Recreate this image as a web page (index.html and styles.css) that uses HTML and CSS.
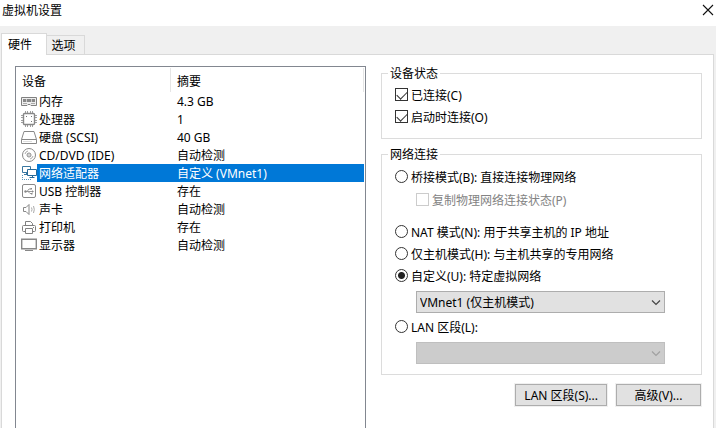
FILE: index.html
```html
<!DOCTYPE html>
<html lang="zh-CN">
<head>
<meta charset="utf-8">
<title>虚拟机设置</title>
<link rel="stylesheet" href="styles.css">
</head>
<body>
<header class="titlebar">
  <h1>虚拟机设置</h1>
  <button class="close" type="button" aria-label="关闭">
    <svg width="12" height="12" viewBox="0 0 12 12"><path d="M1 1l10 10M11 1L1 11" fill="none" stroke="#111" stroke-width="1.1"/></svg>
  </button>
</header>
<div class="tabs" role="tablist">
  <button class="tab active" type="button" role="tab" aria-selected="true">硬件</button>
  <button class="tab" type="button" role="tab" aria-selected="false">选项</button>
</div>
<main class="panel">
  <section class="list">
    <table class="devices">
      <thead><tr><th class="name">设备</th><th>摘要</th></tr></thead>
      <tbody>
        <tr><td><div class="device"><svg width="16" height="16" viewBox="0 0 16 16"><path d="M.5 4.500h15v8H10l-1-1H7l-1 1H.5z" fill="#eee" stroke="#808080"/><path d="M2 6h12v3H2z" fill="#888"/><path d="M5.500 6v3M10.500 6v3" stroke="#ccc"/><path d="M2 10.500h4M10 10.500h4" stroke="#aaa"/></svg><span>内存</span></div></td><td>4.3 GB</td></tr>
        <tr><td><div class="device"><svg width="16" height="16" viewBox="0 0 16 16"><path d="M4.500 0v16M6.500 0v16M9.500 0v16M11.500 0v16M0 4.500h16M0 6.500h16M0 9.500h16M0 11.500h16" stroke="#a0a0a0"/><rect x="2.500" y="2.500" width="11" height="11" rx="1" fill="#fff" stroke="#888" stroke-width="1.400"/><path d="M5 5h1v1H5zM10 5h1v1h-1zM10 10h1v1h-1z" fill="#777"/></svg><span>处理器</span></div></td><td>1</td></tr>
        <tr><td><div class="device"><svg width="16" height="16" viewBox="0 0 16 16"><path d="M3 2.500h10l2.500 8v4H.5v-4zM.5 10.500h15" fill="#fff" stroke="#888"/><path d="M2 12.500h9" stroke="#ddd"/></svg><span>硬盘 (SCSI)</span></div></td><td>40 GB</td></tr>
        <tr><td><div class="device"><svg width="16" height="16" viewBox="0 0 16 16"><g fill="none" stroke="#888"><circle cx="8" cy="8" r="6.500"/><circle cx="8" cy="8" r="2"/><path d="M4 7a4 4 0 0 1 3-3M12 9a4 4 0 0 1-3 3" stroke="#aaa"/></g><circle cx="8" cy="8" r=".7" fill="#888"/></svg><span>CD/DVD (IDE)</span></div></td><td>自动检测</td></tr>
        <tr class="selected"><td><div class="device"><svg width="16" height="16" viewBox="0 0 16 16"><path d="M1.500 1.500h8v6h-8zM3 9.500h5M5.500 7.500v2" fill="#fff" stroke="#3977a0"/><path d="M6.500 4.500h9v6h-9zM8.500 12.500h5M11.500 10.500v2" fill="#fff" stroke="#286a98"/><path d="M1.500 10v5M3 14.500h8" stroke="#5795bd" stroke-dasharray="1 1" fill="none"/></svg><span>网络适配器</span></div></td><td>自定义 (VMnet1)</td></tr>
        <tr><td><div class="device"><svg width="16" height="16" viewBox="0 0 16 16"><rect x="1.500" y="1.500" width="13" height="13" rx="1.500" fill="#fff" stroke="#888"/><path d="M4 8.500h8M6 8.500l2-2.500h2M7 8.500l2 2h1" fill="none" stroke="#999"/><circle cx="4.500" cy="8.500" r="1.200" fill="#888"/><path d="M11 7.200l2 1.300-2 1.300zM9.500 5h1.500v1.500H9.500zM10 10h1.500v1.500H10z" fill="#888"/></svg><span>USB 控制器</span></div></td><td>存在</td></tr>
        <tr><td><div class="device"><svg width="16" height="16" viewBox="0 0 16 16"><g fill="none" stroke="#888"><path d="M2.500 6.500H5l3-3v10l-3-3H2.500z"/><path d="M10.500 6.500q1 2 0 4M12.500 5q1.600 3.500 0 7" stroke="#aaa"/></g></svg><span>声卡</span></div></td><td>自动检测</td></tr>
        <tr><td><div class="device"><svg width="16" height="16" viewBox="0 0 16 16"><g fill="#fff" stroke="#808080"><path d="M4.500 7V2.500h5l2 2V7"/><rect x="1.500" y="6.500" width="13" height="6" rx="1"/><path d="M4.500 9.500h7v5h-7z"/><path d="M12 8.500h1"/></g></svg><span>打印机</span></div></td><td>存在</td></tr>
        <tr><td><div class="device"><svg width="16" height="16" viewBox="0 0 16 16"><path d="M.7 2.200h14.600v9.600H.7z" fill="#fff" stroke="#888" stroke-width="1.400"/><path d="M4 13.500h8" stroke="#888"/></svg><span>显示器</span></div></td><td>自动检测</td></tr>
      </tbody>
    </table>
  </section>
  <form class="settings">
    <fieldset>
      <legend>设备状态</legend>
      <label class="option"><input type="checkbox" checked><span>已连接(C)</span></label>
      <label class="option"><input type="checkbox" checked><span>启动时连接(O)</span></label>
    </fieldset>
    <fieldset class="network">
      <legend>网络连接</legend>
      <label class="option"><input type="radio" name="net"><span>桥接模式(B): 直接连接物理网络</span></label>
      <label class="option nested"><input type="checkbox" disabled><span>复制物理网络连接状态(P)</span></label>
      <label class="option"><input type="radio" name="net"><span>NAT 模式(N): 用于共享主机的 IP 地址</span></label>
      <label class="option"><input type="radio" name="net"><span>仅主机模式(H): 与主机共享的专用网络</span></label>
      <label class="option"><input type="radio" name="net" checked><span>自定义(U): 特定虚拟网络</span></label>
      <div class="combo">
        <select aria-label="特定虚拟网络"><option>VMnet1 (仅主机模式)</option></select>
        <svg width="10" height="6" viewBox="0 0 10 6"><path d="M1 .5l4 4 4-4" fill="none" stroke="currentColor" stroke-width="1.200"/></svg>
      </div>
      <label class="option"><input type="radio" name="net"><span>LAN 区段(L):</span></label>
      <div class="combo disabled">
        <select aria-label="LAN 区段" disabled><option></option></select>
        <svg width="10" height="6" viewBox="0 0 10 6"><path d="M1 .5l4 4 4-4" fill="none" stroke="currentColor" stroke-width="1.200"/></svg>
      </div>
    </fieldset>
    <div class="actions">
      <button type="button">LAN 区段(S)...</button>
      <button type="button">高级(V)...</button>
    </div>
  </form>
</main>
</body>
</html>
```
FILE: styles.css
```css
* { box-sizing: border-box; }
body {
  margin: 0;
  min-height: 100vh;
  display: flex;
  flex-direction: column;
  background: #f0f0f0;
  color: #000;
  font: 12px/16px "Noto Sans", "Noto Sans CJK SC", sans-serif;
}
button, input, select { font: inherit; color: inherit; margin: 0; }
svg { display: block; flex: none; }

.titlebar {
  display: flex;
  justify-content: space-between;
  align-items: center;
  height: 26px;
  padding: 0 2px;
  background: #fff;
}
.titlebar h1 { margin: 0 0 4px; font-size: 12px; font-weight: 400; }
.close { display: flex; padding: 0; margin: 0 0 6px; border: 0; background: none; }

.tabs { display: flex; align-items: flex-end; height: 28px; padding-left: 1px; }
.tab {
  height: 19px;
  width: 38px;
  padding: 2px 4px 0 0;
  border: 1px solid #d9d9d9;
  border-bottom: 0;
  border-left: 0;
  background: #f0f0f0;
}
.tab.active {
  position: relative;
  width: 46px;
  height: 22px;
  margin-bottom: -1px;
  padding: 0 8px 0 0;
  border-left: 1px solid #d9d9d9;
  background: #fff;
}

.panel {
  flex: 1;
  display: flex;
  gap: 15px;
  margin: 0 2px 0 1px;
  padding: 0 11px 0 13px;
  border: 1px solid #d9d9d9;
  border-bottom: 0;
  background: #fff;
}
.list {
  flex: 1;
  margin-top: 11px;
  padding-right: 1px;
  border: 1px solid #828790;
  border-bottom: 0;
}
.devices { width: 100%; border-collapse: collapse; table-layout: fixed; }
.devices th {
  height: 25px;
  padding: 5px 6px 0;
  text-align: left;
  font-weight: 400;
  background: linear-gradient(#e5e5e5, #e5e5e5) right 1px / 1px 24px no-repeat;
}
.devices .name { width: 155px; }
.devices td { height: 18px; padding: 2px 6px 0; }
.devices td:first-child { padding: 0 0 0 5px; }
.device { display: flex; align-items: center; }
.device span { flex: 1; padding: 2px 0 0 2px; }
.selected span, .selected td + td { background: #0078d7; color: #fff; }

.settings { flex: 0 0 321px; padding-top: 9px; }
fieldset { margin: 0; padding: 2px 13px 10px; border: 1px solid #dcdcdc; }
legend { height: 18px; margin-left: -7px; padding: 2px 2px 0; }
.network { margin-top: 6px; padding-top: 3px; }
.option { display: flex; align-items: center; gap: 3px; height: 22px; }
.option span { padding-top: 2px; }
.nested { margin: 1px 0 10px 21px; color: #838383; }
input {
  appearance: none;
  flex: none;
  width: 13px;
  height: 13px;
  border: 1px solid #333;
  background: #fff;
}
.option input { margin-bottom: 1px; }
input[type="radio"] { border-radius: 50%; }
input[type="radio"]:checked { background: radial-gradient(circle, #222 3px, #fff 4px); }
input[type="checkbox"]:checked::before {
  content: "";
  display: block;
  width: 9px;
  height: 5px;
  margin: 2px 0 0 1px;
  border: solid #333;
  border-width: 0 0 1px 1px;
  transform: rotate(-45deg);
}
input:disabled { border-color: #ccc; }

.combo { position: relative; margin: 4px 23px 3px 21px; }
.combo select {
  appearance: none;
  display: block;
  width: 100%;
  height: 22px;
  padding: 2px 3px 0;
  border: 1px solid #adadad;
  border-radius: 0;
  background: #e1e1e1;
}
.combo svg { position: absolute; right: 4px; top: 9px; color: #444; pointer-events: none; }
.combo.disabled { margin-bottom: 0; }
.combo.disabled select { opacity: 1; background: #ccc; border-color: #bfbfbf; }
.combo.disabled svg { color: #a0a0a0; }

.actions { display: flex; justify-content: flex-end; gap: 9px; margin: 9px 1px 0 0; }
.actions button {
  height: 22px;
  min-width: 85px;
  padding: 2px 8px 0;
  border: 1px solid #adadad;
  background: #e1e1e1;
  box-shadow: 0 0 0 1px #f0f0f0;
}
```
